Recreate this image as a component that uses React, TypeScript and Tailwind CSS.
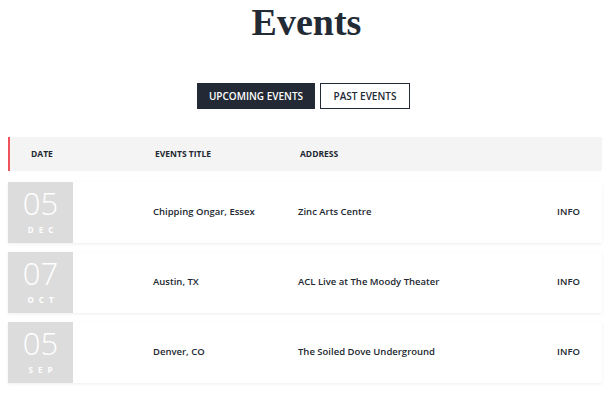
const events = [
  { day: "05", month: "DEC", title: "Chipping Ongar, Essex", address: "Zinc Arts Centre" },
  { day: "07", month: "OCT", title: "Austin, TX", address: "ACL Live at The Moody Theater" },
  { day: "05", month: "SEP", title: "Denver, CO", address: "The Soiled Dove Underground" },
]

export default function App() {
  return (
    <div className="min-h-[397px] bg-white font-['Open_Sans','Liberation_Sans',sans-serif] text-[#222831]">
      {/* Title */}
      <h1 className="pt-[2px] pr-[3px] text-center font-['Liberation_Serif',serif] text-[38px] font-bold leading-[40px] text-[#222a35]">
        Events
      </h1>

      {/* Tabs */}
      <div className="mt-[41px] flex justify-center gap-[5px] pr-[9px]">
        <button className="h-[26px] w-[118px] bg-[#232a35] text-[10px] font-semibold text-white">UPCOMING EVENTS</button>
        <button className="h-[26px] w-[90px] border border-[#232a35] bg-white text-[10px] font-semibold text-[#232a35]">
          PAST EVENTS
        </button>
      </div>

      {/* Table */}
      <div className="ml-2 mt-[28px] w-[594px]">
        <div className="flex h-[34px] items-center border-l-2 border-[#f0525a] bg-[#f4f4f4] text-[8.5px] font-bold">
          <div className="ml-[21px] w-[124px]">DATE</div>
          <div className="w-[145px]">EVENTS TITLE</div>
          <div>ADDRESS</div>
        </div>

        <div className="mt-[11px] flex flex-col gap-[9px]">
          {events.map((e, i) => (
            <div key={i} className="flex h-[61px] items-center bg-white shadow-[0_1px_3px_rgba(0,0,0,0.07)]">
              <div className="flex h-full w-[65px] flex-col items-center bg-[#dcdcdc] text-white">
                <div className="text-[31px] font-light leading-[42px]">{e.day}</div>
                <div className="pl-[5px] text-[8px] font-bold leading-[12px] tracking-[5px]">{e.month}</div>
              </div>
              <div className="ml-[80px] w-[145px] text-[9.5px] font-semibold">{e.title}</div>
              <div className="flex-1 text-[9.5px] font-semibold">{e.address}</div>
              <div className="mr-[22px] text-[9.5px] font-semibold">INFO</div>
            </div>
          ))}
        </div>
      </div>
    </div>
  )
}
